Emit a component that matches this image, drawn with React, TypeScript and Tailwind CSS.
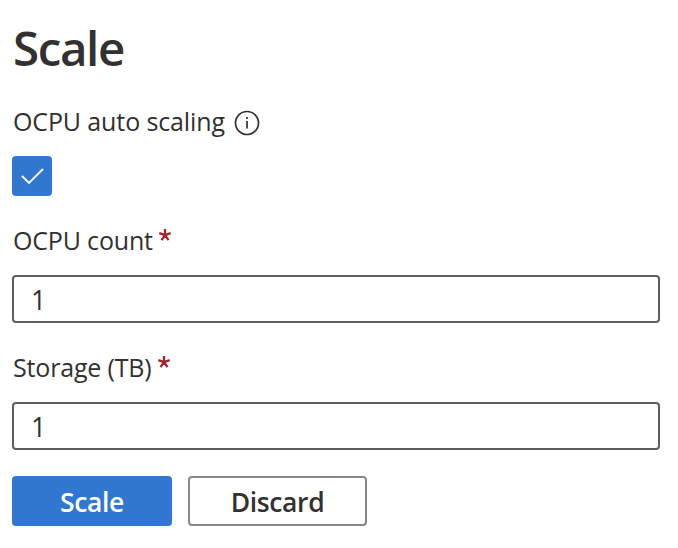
import React from 'react';

function Field({ label }: { label: string }) {
  return (
    <label className="block">
      <span className="flex h-[34px] items-center pl-px text-[25px] tracking-[-0.17px] whitespace-nowrap">
        {label}
        <svg viewBox="0 0 14 14" className="ml-[5px] -mt-3 h-[14px] w-[14px] stroke-[#a4262c]" strokeWidth="2.3">
          <path d="M7 7.200V1M7 7.200L1.300 5.200M7 7.200l5.700-2M7 7.200l-3.500 5M7 7.200l3.500 5" />
        </svg>
      </span>
      <input defaultValue="1" className="mt-[17px] block h-12 w-[648px] rounded-[4px] border-2 border-[#605e5c] bg-white pt-0.5 pr-[18px] pl-[17px] text-[26.5px] outline-none" />
    </label>
  );
}

export default function App() {
  return (
    <main className="h-[548px] w-[678px] overflow-hidden bg-white pl-3 pt-[15px] font-['Open_Sans',sans-serif] text-[#323130]">
      <h1 className="h-[65px] pl-px text-[47.5px] leading-[65px] font-semibold tracking-[-1.4px]">Scale</h1>
      <div className="mt-[25px] flex h-[34px] items-center pl-px text-[25px] tracking-[-0.12px] whitespace-nowrap">
        OCPU auto scaling
        <svg viewBox="0 0 26 26" className="mt-0.5 ml-[9px] h-[26px] w-[26px] fill-none stroke-[#323130]" strokeWidth="1.700">
          <circle cx="13" cy="13" r="11.500" />
          <path d="M13 11v7.500M13 7v2" />
        </svg>
      </div>
      <button aria-label="OCPU auto scaling" className="mt-[17px] flex h-10 w-10 items-center justify-center rounded-[4px] bg-[#3277cf]">
        <svg viewBox="0 0 24 18" className="h-[18px] w-6 fill-none stroke-white" strokeWidth="1.800"><path d="M2 9l7 7L23 2" /></svg>
      </button>
      <div className="mt-[28px]"><Field label="OCPU count" /></div>
      <div className="mt-[28px]"><Field label="Storage (TB)" /></div>
      <div className="mt-[26px] flex gap-4 text-[26.5px] font-semibold tracking-[-0.35px]">
        <button className="h-[50px] w-[160px] rounded-[4px] bg-[#3277cf] pt-1 text-white">Scale</button>
        <button className="h-[50px] w-[179px] rounded-[4px] border-2 border-[#8a8886] pt-1">Discard</button>
      </div>
    </main>
  );
}
